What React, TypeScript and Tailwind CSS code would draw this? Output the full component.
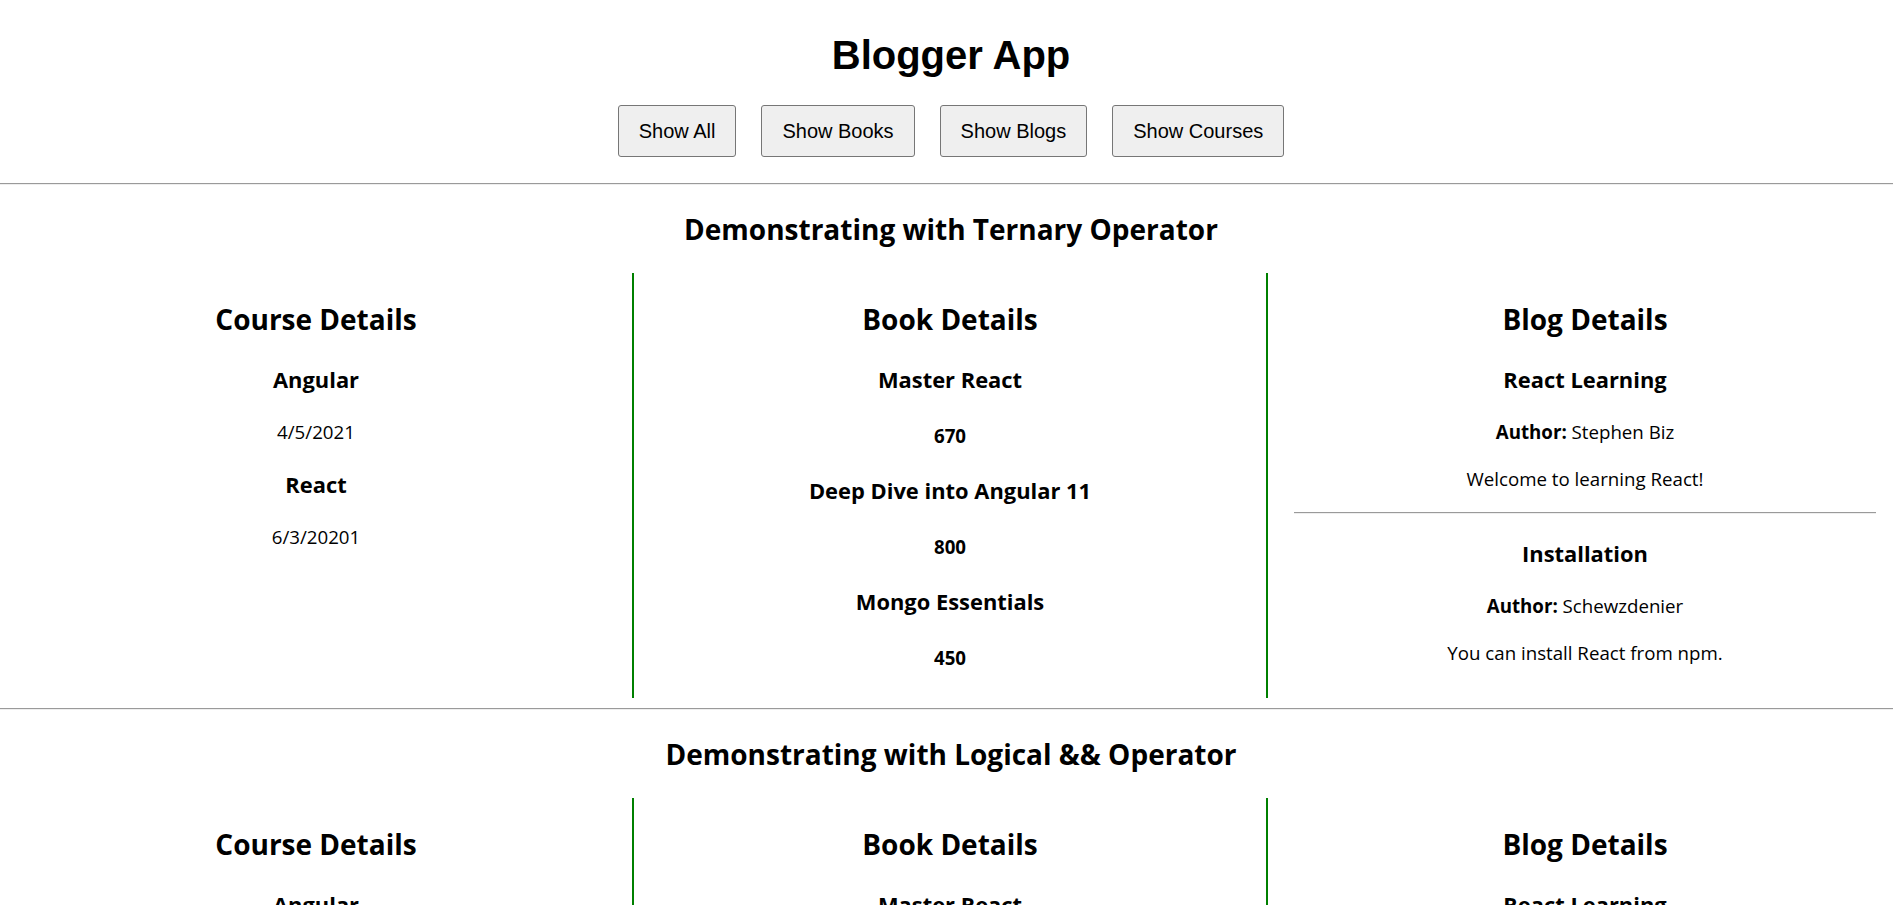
import React from "react";

const courses = [
  { name: "Angular", date: "4/5/2021" },
  { name: "React", date: "6/3/20201" },
];

const books = [
  { name: "Master React", price: 670 },
  { name: "Deep Dive into Angular 11", price: 800 },
  { name: "Mongo Essentials", price: 450 },
];

const blogs = [
  { title: "React Learning", author: "Stephen Biz", body: "Welcome to learning React!" },
  { title: "Installation", author: "Schewzdenier", body: "You can install React from npm." },
];

const h2 = "my-[25px] text-[28px] leading-[40px] font-bold";
const h3 = "my-[23.4px] text-[21.9px] leading-[31px] font-bold";
const h4 = "my-[26.6px] text-[18.7px] leading-[27px] font-bold";
const p = "my-[20px] text-[18.7px] leading-[27px]";

function Rule({ className = "" }: { className?: string }) {
  return <div className={`border-t border-b border-t-[#9a9a9a] border-b-[#eeeeee] ${className}`} />;
}

function CourseDetails() {
  return (
    <div className="w-[634px] shrink-0 border-r-2 border-[#008000] pt-px text-center">
      <h2 className={h2}>Course Details</h2>
      {courses.map((c) => (
        <div key={c.name}>
          <h3 className={h3}>{c.name}</h3>
          <p className={p}>{c.date}</p>
        </div>
      ))}
    </div>
  );
}

function BookDetails() {
  return (
    <div className="w-[634px] shrink-0 border-r-2 border-[#008000] pt-px text-center">
      <h2 className={h2}>Book Details</h2>
      {books.map((b) => (
        <div key={b.name}>
          <h3 className={h3}>{b.name}</h3>
          <h4 className={h4}>{b.price}</h4>
        </div>
      ))}
    </div>
  );
}

function BlogDetails() {
  return (
    <div className="w-[634px] shrink-0 pt-px text-center">
      <h2 className={h2}>Blog Details</h2>
      {blogs.map((b, i) => (
        <div key={b.title}>
          {i > 0 && <Rule className="mx-[26px] my-[20px]" />}
          <h3 className={h3}>{b.title}</h3>
          <p className={p}>
            <b className="font-bold">Author:</b> {b.author}
          </p>
          <p className={p}>{b.body}</p>
        </div>
      ))}
    </div>
  );
}

function Demo({ title }: { title: string }) {
  return (
    <section>
      <h2 className="my-[24px] text-center text-[28px] leading-[40px] font-bold">{title}</h2>
      <div className="flex">
        <CourseDetails />
        <BookDetails />
        <BlogDetails />
      </div>
    </section>
  );
}

export default function App() {
  const buttons = ["Show All", "Show Books", "Show Blogs", "Show Courses"];
  return (
    <div className="w-full overflow-hidden bg-white text-black font-['Segoe_UI','Open_Sans',sans-serif]">
      <div className="w-[1902px]">
        <header className="pt-[32px] text-center">
          <h1 className="text-[40px] leading-[46px] font-bold font-['Liberation_Sans',Arial,sans-serif]">Blogger App</h1>
          <div className="mt-[27px] flex justify-center gap-[25px]">
            {buttons.map((label) => (
              <button
                key={label}
                className="h-[52px] rounded-[3px] border border-[#767676] bg-[#efefef] px-[20px] text-[20px] font-['Liberation_Sans',Arial,sans-serif]"
              >
                {label}
              </button>
            ))}
          </div>
        </header>
        <Rule className="mt-[26px]" />
        <Demo title="Demonstrating with Ternary Operator" />
        <Rule className="mt-[10px]" />
        <Demo title="Demonstrating with Logical && Operator" />
      </div>
    </div>
  );
}
